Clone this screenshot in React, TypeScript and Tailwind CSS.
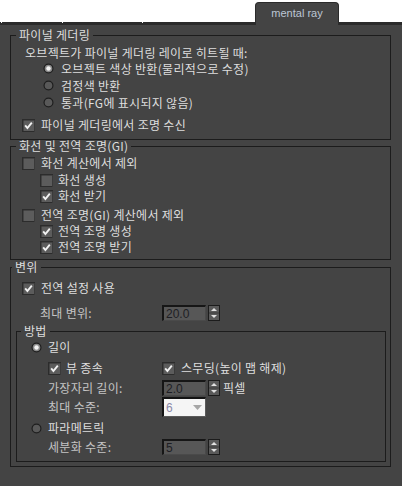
import React from "react";

const Check = ({ checked }: { checked: boolean }) => (
  <svg width="13" height="13" viewBox="0 0 13 13" className="shrink-0">
    <rect x="0" y="0" width="13" height="13" fill="#2c2c2c" />
    <rect x="1.5" y="1.5" width="10.5" height="10.5" fill="#5c5c5c" />
    <rect x="12" y="1" width="1" height="12" fill="#3a3a3a" />
    {checked && (
      <polyline points="3.2,6.4 5.4,9 9.8,3.6" fill="none" stroke="#f2f2f2" strokeWidth="1.9" />
    )}
  </svg>
);

const Radio = ({ on }: { on: boolean }) => (
  <svg width="11" height="11" viewBox="0 0 11 11" className="shrink-0">
    <circle cx="5.5" cy="5.5" r="5" fill="#1e1e1e" />
    <circle cx="5.5" cy="5.5" r="3.8" fill={on ? "#8a8a8a" : "#595959"} />
    {on && <circle cx="5.5" cy="5.5" r="2.2" fill="#f4f4f4" />}
  </svg>
);

const Arrows = () => (
  <svg width="12" height="16" viewBox="0 0 12 16" className="shrink-0">
    <rect x="0" y="0" width="12" height="16" fill="#1c1c1c" />
    <rect x="1" y="1" width="10" height="14" fill="#5a5a5a" />
    <rect x="1" y="7.5" width="10" height="1" fill="#3a3a3a" />
    <polygon points="3,6 9,6 6,3" fill="#e2e2e2" />
    <polygon points="3,10 9,10 6,13" fill="#e2e2e2" />
  </svg>
);

const Field = ({ value }: { value: string }) => (
  <div className="flex items-center gap-[2px]">
    <div className="w-[44px] h-[16px] bg-[#575757] border-t-2 border-l-2 border-[#161616] border-r border-b border-r-[#4a4a4a] border-b-[#4a4a4a] flex items-center pl-[2px] text-[12px] leading-[12px] tracking-normal text-[#1e1e24] font-['Liberation_Sans',sans-serif]">
      {value}
    </div>
    <Arrows />
  </div>
);

const Legend = ({ children, ml }: { children: React.ReactNode; ml: string }) => (
  <legend className={`${ml} px-[3px] leading-[12px] text-[12px] text-[#dedede]`}>{children}</legend>
);

const Row = ({ children, cls }: { children: React.ReactNode; cls: string }) => (
  <div className={`flex items-center ${cls}`}>{children}</div>
);

export default function App() {
  return (
    <div className="w-[402px] h-[486px] bg-[#444444] overflow-hidden flex flex-col font-['Noto_Sans_CJK_KR','Noto_Sans',sans-serif] text-[12px] tracking-[0.3px] text-[#dedede]">
      {/* tab header */}
      <div className="h-[25px] flex items-end bg-white shrink-0">
        <div className="w-[1px] h-[25px] border-b-[3px] border-[#2b2b2b]" />
        <div className="w-[1px] h-[25px] border-b-[2px] border-[#2b2b2b]" />
        <div className="w-[60px] h-[25px] border-b-[3px] border-[#2b2b2b]" />
        <div className="w-[1px] h-[25px] border-b-[2px] border-[#2b2b2b]" />
        <div className="w-[79px] h-[25px] border-b-[3px] border-[#2b2b2b]" />
        <div className="w-[1px] h-[25px] border-b-[2px] border-[#2b2b2b]" />
        <div className="w-[112px] h-[25px] border-b-[3px] border-[#2b2b2b]" />
        <div className="w-[84px] h-[23px] bg-[#444444] border border-b-0 border-[#2b2b2b] rounded-t-[4px] flex items-center justify-center pb-[2px] text-[11px] tracking-normal text-[#bcc6d4] font-['Liberation_Sans',sans-serif]">
          mental ray
        </div>
        <div className="flex-1 h-[25px] border-b-[3px] border-[#2b2b2b]" />
      </div>

      <div className="flex flex-col">
        {/* 파이널 게더링 */}
        <fieldset className="mt-[4px] ml-[10px] mr-[11px] border border-[#1c1c1c]">
          <Legend ml="ml-[5px]">파이널 게더링</Legend>
          <div className="flex flex-col pb-[6px]">
            <Row cls="mt-[4px] h-[15px] pl-[14px]">오브젝트가 파이널 게더링 레이로 히트될 때:</Row>
            <Row cls="h-[17px] pl-[32px] gap-[7px]"><Radio on={true} />오브젝트 색상 반환(물리적으로 수정)</Row>
            <Row cls="h-[17px] pl-[32px] gap-[7px]"><Radio on={false} />검정색 반환</Row>
            <Row cls="h-[17px] pl-[32px] gap-[7px]"><Radio on={false} />통과(FG에 표시되지 않음)</Row>
            <Row cls="mt-[6px] h-[16px] pl-[11px] gap-[6px]"><Check checked={true} />파이널 게더링에서 조명 수신</Row>
          </div>
        </fieldset>

        {/* 화선 및 전역 조명 */}
        <fieldset className="ml-[10px] mr-[11px] border border-[#1c1c1c]">
          <Legend ml="ml-[5px]">화선 및 전역 조명(GI)</Legend>
          <div className="flex flex-col pb-[4px]">
            <Row cls="mt-[3px] h-[16px] pl-[11px] gap-[6px]"><Check checked={false} />화선 계산에서 제외</Row>
            <Row cls="mt-[1px] h-[16px] pl-[29px] gap-[5px]"><Check checked={false} />화선 생성</Row>
            <Row cls="h-[16px] pl-[29px] gap-[5px]"><Check checked={true} />화선 받기</Row>
            <Row cls="mt-[3px] h-[16px] pl-[11px] gap-[6px]"><Check checked={false} />전역 조명(GI) 계산에서 제외</Row>
            <Row cls="h-[16px] pl-[29px] gap-[5px]"><Check checked={true} />전역 조명 생성</Row>
            <Row cls="h-[16px] pl-[29px] gap-[5px]"><Check checked={true} />전역 조명 받기</Row>
          </div>
        </fieldset>

        {/* 변위 */}
        <fieldset className="mt-[1px] ml-[10px] mr-[11px] border border-[#1c1c1c]">
          <Legend ml="ml-[1px]">변위</Legend>
          <div className="flex flex-col pb-[4px]">
            <Row cls="mt-[7px] h-[16px] pl-[11px] gap-[6px]"><Check checked={true} />전역 설정 사용</Row>
            <Row cls="mt-[9px] h-[16px] pl-[29px]">
              <div className="w-[122px] text-[#c4c4c4]">최대 변위:</div>
              <Field value="20.0" />
            </Row>

            <fieldset className="mt-[4px] ml-[5px] mr-[4px] border border-[#1c1c1c]">
              <Legend ml="ml-[4px]">방법</Legend>
              <div className="flex flex-col pb-[6px]">
                <Row cls="mt-[2px] h-[16px] pl-[14px] gap-[6px]"><Radio on={true} />길이</Row>
                <Row cls="mt-[5px] h-[16px] pl-[31px]">
                  <div className="w-[114px] flex items-center gap-[5px]"><Check checked={true} />뷰 종속</div>
                  <div className="flex items-center gap-[6px]"><Check checked={true} />스무딩(높이 맵 해제)</div>
                </Row>
                <Row cls="mt-[4px] h-[16px] pl-[31px]">
                  <div className="w-[114px] text-[#c4c4c4]">가장자리 길이:</div>
                  <Field value="2.0" />
                  <span className="ml-[3px]">픽셀</span>
                </Row>
                <Row cls="mt-[1px] h-[20px] pl-[31px]">
                  <div className="w-[114px] text-[#c4c4c4]">최대 수준:</div>
                  <div className="w-[44px] h-[20px] bg-neutral-100 border-t-2 border-l-2 border-t-[#141414] border-l-[#141414] border-r border-b border-r-[#5a5a5a] border-b-[#5a5a5a] flex items-center justify-between pl-[2px] pr-[3px] text-[12px] tracking-normal text-[#8a88a8] font-['Liberation_Sans',sans-serif]">
                    <span>6</span>
                    <svg width="9" height="5" viewBox="0 0 9 5"><polygon points="0,0 9,0 4.5,5" fill="#a6a6a6" /></svg>
                  </div>
                </Row>
                <Row cls="mt-[3px] h-[16px] pl-[14px] gap-[6px]"><Radio on={false} />파라메트릭</Row>
                <Row cls="mt-[3px] h-[16px] pl-[31px]">
                  <div className="w-[114px] text-[#c4c4c4]">세분화 수준:</div>
                  <Field value="5" />
                </Row>
              </div>
            </fieldset>
          </div>
        </fieldset>
      </div>
    </div>
  );
}
